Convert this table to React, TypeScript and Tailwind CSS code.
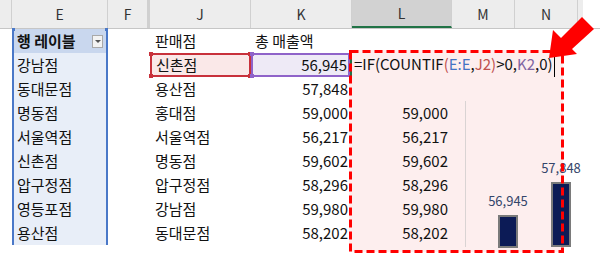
import React from 'react';

// 피벗 열(E)과 판매점/매출 목록
const pivotItems = ['강남점', '동대문점', '명동점', '서울역점', '신촌점', '압구정점', '영등포점', '용산점'];

const salesRows = [
  { store: '신촌점', amount: '56,945', result: null },
  { store: '용산점', amount: '57,848', result: null },
  { store: '홍대점', amount: '59,000', result: '59,000' },
  { store: '서울역점', amount: '56,217', result: '56,217' },
  { store: '명동점', amount: '59,602', result: '59,602' },
  { store: '압구정점', amount: '58,296', result: '58,296' },
  { store: '강남점', amount: '59,980', result: '59,980' },
  { store: '동대문점', amount: '58,202', result: '58,202' },
];

const columns = [
  { key: 'E', w: 'w-[96px]' },
  { key: 'F', w: 'w-[42px]' },
  { key: 'J', w: 'w-[101px]' },
  { key: 'K', w: 'w-[101px]' },
  { key: 'L', w: 'w-[100px]' },
  { key: 'M', w: 'w-[63px]' },
  { key: 'N', w: 'w-[63px]' },
];

const Formula = () => (
  <span className="whitespace-nowrap">
    =IF(COUNTIF<span className="text-[#c0504d]">(</span>
    <span className="text-[#4472c4]">E:E</span>,
    <span className="text-[#c0504d]">J2</span>
    <span className="text-[#c0504d]">)</span>&gt;0,
    <span className="text-[#8064a2]">K2</span>,0)
    <span className="inline-block w-px h-[21px] bg-black align-middle ml-px" />
  </span>
);

const Corner = ({ color, pos }: { color: string; pos: string }) => (
  <span className={`absolute w-[4px] h-[4px] ${color} ${pos}`} />
);

const App = () => {
  return (
    <div className="relative w-[600px] h-[263px] bg-white overflow-hidden text-[15px] text-[#111] font-['Noto_Sans_CJK_KR','Noto_Sans',sans-serif]">
      {/* 열 머리글 */}
      <div className="flex h-[29px] border-b border-[#c6c6c6] text-[14px] text-[#333]">
        <div className="w-[12px] bg-[#ededed] border-r border-[#d0d0d0]" />
        {columns.map(c => (
          <div
            key={c.key}
            className={`${c.w} flex items-center justify-center border-r border-[#d0d0d0] ${
              c.key === 'L' ? 'bg-[#d2d2d2] border-b-2 border-b-[#217346]' : 'bg-[#ededed]'
            } ${c.key === 'F' ? 'border-r-[3px] border-r-[#d0d0d0]' : ''}`}
          >
            {c.key}
          </div>
        ))}
        <div className="w-[5px] bg-[#ededed]" />
      </div>

      {/* 수식 결과 영역 강조 배경 */}
      <div className="absolute left-[349px] top-[50px] w-[214px] h-[202px] bg-[#fdeeee]" />

      {/* 1행: 머리글 */}
      <div className="relative flex h-[24px] items-center">
        <div className="w-[12px]" />
        <div className="relative w-[96px] h-full flex items-center justify-between pl-[3px] pr-[3px] bg-[#c9d7ee] border-x-2 border-[#4a78c8] font-bold">
          <span>행 레이블</span>
          <span className="w-[11px] h-[13px] bg-[#f3f3f3] border border-[#a9a9a9] flex items-center justify-center">
            <span className="w-0 h-0 border-x-[3px] border-x-transparent border-t-[3px] border-t-[#555]" />
          </span>
          <span className="absolute -left-[2px] -top-[1px] w-[3px] h-[3px] bg-[#4a78c8]" />
          <span className="absolute -right-[2px] -top-[1px] w-[3px] h-[3px] bg-[#4a78c8]" />
        </div>
        <div className="w-[42px]" />
        <div className="w-[101px] pl-[5px]">판매점</div>
        <div className="w-[101px] pl-[4px]">총 매출액</div>
      </div>

      {/* 2~9행 */}
      {salesRows.map((row, i) => (
        <div key={row.store + i} className="relative flex h-[24px] items-center">
          <div className="w-[12px]" />
          <div className="w-[96px] h-full flex items-center pl-[3px] bg-[#e8eef8] border-x-2 border-[#4a78c8]">
            {pivotItems[i]}
          </div>
          <div className="w-[42px]" />
          {i === 0 ? (
            <>
              <div className="relative w-[101px] h-full flex items-center pl-[4px] bg-[#fae8e8] border-2 border-[#c8313b]">
                {row.store}
                <Corner color="bg-[#c8313b]" pos="-left-[3px] -top-[3px]" />
                <Corner color="bg-[#c8313b]" pos="-right-[3px] -top-[3px]" />
                <Corner color="bg-[#c8313b]" pos="-left-[3px] -bottom-[3px]" />
                <Corner color="bg-[#c8313b]" pos="-right-[3px] -bottom-[3px]" />
              </div>
              <div className="relative w-[99px] h-full flex items-center justify-end pr-[1px] bg-[#eeeaf6] border-2 border-[#8f63c9]">
                {row.amount}
                <Corner color="bg-[#8f63c9]" pos="-left-[3px] -top-[3px]" />
                <Corner color="bg-[#8f63c9]" pos="-left-[3px] -bottom-[3px]" />
              </div>
              <div className="w-[2px] h-full bg-[#217346]" />
              <div className="pl-[2px] overflow-visible">
                <Formula />
              </div>
            </>
          ) : (
            <>
              <div className="w-[101px] pl-[5px]">{row.store}</div>
              <div className="w-[101px] text-right pr-[4px]">{row.amount}</div>
              <div className="w-[100px] text-right pr-[4px]">{row.result}</div>
            </>
          )}
        </div>
      ))}

      {/* 차트 */}
      <svg className="absolute left-0 top-0 pointer-events-none" width="600" height="263">
        <line x1="465.5" y1="101" x2="465.5" y2="247" stroke="#d9d3d3" strokeWidth="1" />
        <rect x="499" y="216" width="18" height="31" fill="#0c1b56" stroke="#7a7a7a" strokeWidth="2" />
        <rect x="552" y="183" width="18" height="63" fill="#0c1b56" stroke="#7a7a7a" strokeWidth="2" />
        <text x="508" y="206" textAnchor="middle" fontSize="13" fill="#34456a" fontFamily="Noto Sans CJK KR, sans-serif">56,945</text>
        <text x="561" y="173" textAnchor="middle" fontSize="13" fill="#34456a" fontFamily="Noto Sans CJK KR, sans-serif">57,848</text>
      </svg>

      {/* 강조 표시: 점선 상자와 화살표 */}
      <svg className="absolute left-0 top-0 pointer-events-none" width="600" height="263">
        <rect x="350.5" y="51.5" width="212" height="200" fill="none" stroke="#ff0000" strokeWidth="3" strokeDasharray="8 4" />
        <polygon points="549,58 553,30 561,38 582,17 594,29 572,49 577,54" fill="#ff0000" />
      </svg>
    </div>
  );
};

export default App;
